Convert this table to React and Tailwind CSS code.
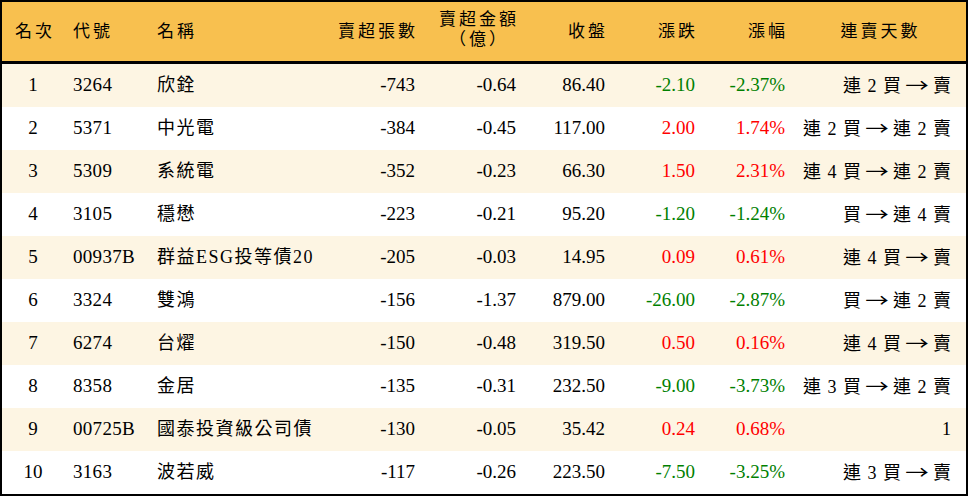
import React from 'react';

const rows = [
  { rank: 1, code: '3264', name: '欣銓', lots: '-743', amt: '-0.64', close: '86.40', chg: '-2.10', pct: '-2.37%', streak: '連 2 買 → 賣' },
  { rank: 2, code: '5371', name: '中光電', lots: '-384', amt: '-0.45', close: '117.00', chg: '2.00', pct: '1.74%', streak: '連 2 買 → 連 2 賣' },
  { rank: 3, code: '5309', name: '系統電', lots: '-352', amt: '-0.23', close: '66.30', chg: '1.50', pct: '2.31%', streak: '連 4 買 → 連 2 賣' },
  { rank: 4, code: '3105', name: '穩懋', lots: '-223', amt: '-0.21', close: '95.20', chg: '-1.20', pct: '-1.24%', streak: '買 → 連 4 賣' },
  { rank: 5, code: '00937B', name: '群益ESG投等債20', lots: '-205', amt: '-0.03', close: '14.95', chg: '0.09', pct: '0.61%', streak: '連 4 買 → 賣' },
  { rank: 6, code: '3324', name: '雙鴻', lots: '-156', amt: '-1.37', close: '879.00', chg: '-26.00', pct: '-2.87%', streak: '買 → 連 2 賣' },
  { rank: 7, code: '6274', name: '台燿', lots: '-150', amt: '-0.48', close: '319.50', chg: '0.50', pct: '0.16%', streak: '連 4 買 → 賣' },
  { rank: 8, code: '8358', name: '金居', lots: '-135', amt: '-0.31', close: '232.50', chg: '-9.00', pct: '-3.73%', streak: '連 3 買 → 連 2 賣' },
  { rank: 9, code: '00725B', name: '國泰投資級公司債', lots: '-130', amt: '-0.05', close: '35.42', chg: '0.24', pct: '0.68%', streak: '1' },
  { rank: 10, code: '3163', name: '波若威', lots: '-117', amt: '-0.26', close: '223.50', chg: '-7.50', pct: '-3.25%', streak: '連 3 買 → 賣' },
];

const cols = 'grid grid-cols-[64px_84px_180px_95px_101px_89px_90px_90px_1fr]';

// the arrow is drawn wide in the reference, so give it the CJK face
const Streak = ({ text }) => {
  const parts = text.split(' → ');
  return (
    <>
      {parts.map((p, i) => (
        <React.Fragment key={i}>
          {i > 0 && (
            <span className="inline-block mx-[6px] scale-x-[1.3]" style={{ fontFamily: '"Noto Sans CJK TC", sans-serif' }}>
              →
            </span>
          )}
          {p}
        </React.Fragment>
      ))}
    </>
  );
};

const App = () => {
  return (
    <div
      className="w-[968px] h-[496px] bg-white border-2 border-black text-black text-[19px] overflow-hidden"
      style={{ fontFamily: '"Liberation Serif", "Noto Sans CJK TC", serif' }}
    >
      <div className={`${cols} h-[62px] bg-[#f8c04f] border-b-[3px] border-black items-center tracking-[3px] text-[17px]`}>
        <div className="text-center pl-[2px]">名次</div>
        <div className="pl-[7px]">代號</div>
        <div className="pl-[7px]">名稱</div>
        <div className="text-right pr-[7px]">賣超張數</div>
        <div className="text-right pr-[7px]">
          <div className="inline-block text-center leading-[20px]">
            賣超金額<br />（億）
          </div>
        </div>
        <div className="text-right pr-[7px]">收盤</div>
        <div className="text-right pr-[7px]">漲跌</div>
        <div className="text-right pr-[7px]">漲幅</div>
        <div className="text-center">連賣天數</div>
      </div>

      {rows.map((r, i) => {
        const up = !r.chg.startsWith('-');
        const color = up ? 'text-[#ff0000]' : 'text-[#008000]';
        return (
          <div
            key={r.rank}
            className={`${cols} h-[43px] items-center ${i % 2 === 0 ? 'bg-[#fdf5e3]' : 'bg-white'}`}
          >
            <div className="text-center pr-[2px]">{r.rank}</div>
            <div className="pl-[7px] tracking-[0.3px]">{r.code}</div>
            <div className="pl-[7px] text-[18px] tracking-[1.5px] whitespace-nowrap">{r.name}</div>
            <div className="text-right pr-[10px]">{r.lots}</div>
            <div className="text-right pr-[10px]">{r.amt}</div>
            <div className="text-right pr-[10px]">{r.close}</div>
            <div className={`text-right pr-[10px] ${color}`}>{r.chg}</div>
            <div className={`text-right pr-[10px] ${color}`}>{r.pct}</div>
            <div className="text-right pr-[14px] text-[18px] tracking-[1px] whitespace-nowrap">
              <Streak text={r.streak} />
            </div>
          </div>
        );
      })}
    </div>
  );
};

export default App;
